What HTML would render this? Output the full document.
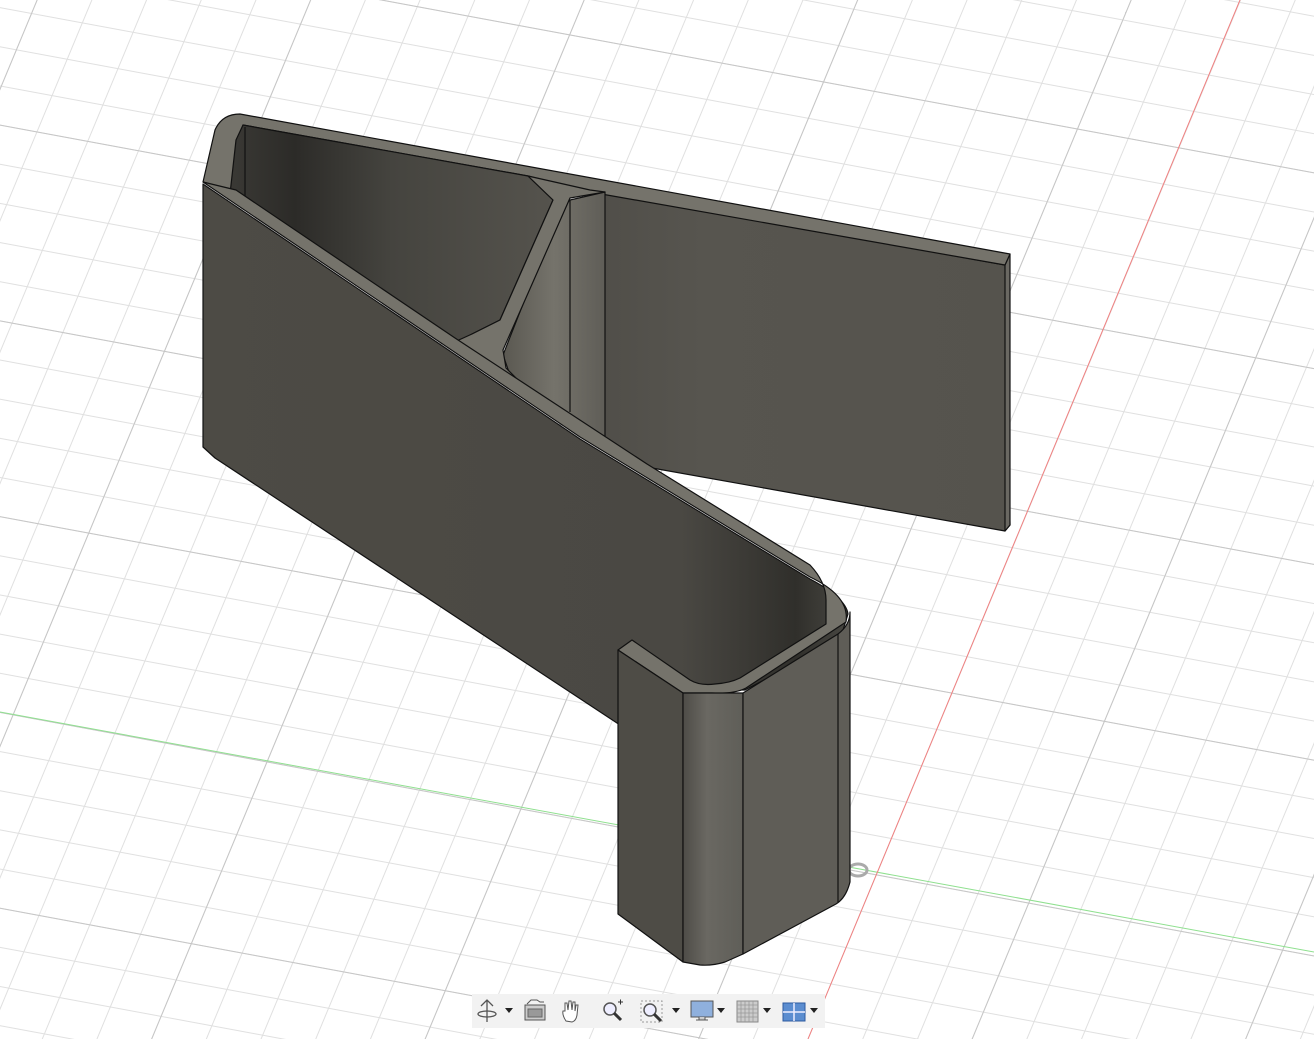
<!DOCTYPE html>
<html><head><meta charset="utf-8"><style>
html,body{margin:0;padding:0;background:#fff;width:1314px;height:1039px;overflow:hidden;font-family:"Liberation Sans",sans-serif}
svg{display:block}
</style></head><body>
<svg width="1314" height="1039" viewBox="0 0 1314 1039" xmlns="http://www.w3.org/2000/svg">
<defs>
<pattern id="pa" width="3000" height="38.5" patternUnits="userSpaceOnUse" patternTransform="rotate(10.5) translate(0,7)">
<line x1="0" y1="0.5" x2="3000" y2="0.5" stroke="#e0e0e0" stroke-width="1"/>
</pattern>
<pattern id="pA" width="3000" height="192.5" patternUnits="userSpaceOnUse" patternTransform="rotate(10.5) translate(0,122.5)">
<line x1="0" y1="0.5" x2="3000" y2="0.5" stroke="#c6c6c6" stroke-width="1"/>
</pattern>
<pattern id="pb" width="50.5" height="3000" patternUnits="userSpaceOnUse" patternTransform="rotate(22.6) translate(33.8,0)">
<line x1="0.5" y1="0" x2="0.5" y2="3000" stroke="#e0e0e0" stroke-width="1"/>
</pattern>
<pattern id="pB" width="252.5" height="3000" patternUnits="userSpaceOnUse" patternTransform="rotate(22.6) translate(33.8,0)">
<line x1="0.5" y1="0" x2="0.5" y2="3000" stroke="#c6c6c6" stroke-width="1"/>
</pattern>
<linearGradient id="pocket" x1="0" y1="0" x2="1" y2="0">
<stop offset="0" stop-color="#3a3935"/><stop offset="0.2" stop-color="#2c2b28"/><stop offset="0.5" stop-color="#45443f"/><stop offset="1" stop-color="#55534d"/>
</linearGradient>
<linearGradient id="rib" x1="0" y1="0" x2="1" y2="0">
<stop offset="0" stop-color="#5a5851"/><stop offset="0.5" stop-color="#75736b"/><stop offset="1" stop-color="#5f5d57"/>
</linearGradient>
<linearGradient id="round" x1="0" y1="0" x2="1" y2="0">
<stop offset="0" stop-color="#4e4c47"/><stop offset="0.4" stop-color="#6a6862"/><stop offset="1" stop-color="#5f5e58"/>
</linearGradient>
<linearGradient id="panel" x1="0" y1="0" x2="1" y2="0">
<stop offset="0" stop-color="#4e4c47"/><stop offset="0.3" stop-color="#57554f"/><stop offset="1" stop-color="#55534d"/>
</linearGradient>
<linearGradient id="wall" x1="203" y1="0" x2="840" y2="0" gradientUnits="userSpaceOnUse">
<stop offset="0" stop-color="#4d4b45"/><stop offset="0.75" stop-color="#4a4843"/><stop offset="0.93" stop-color="#302f2b"/><stop offset="1" stop-color="#45443f"/>
</linearGradient>
</defs>
<rect width="1314" height="1039" fill="#fff"/>
<rect width="1314" height="1039" fill="url(#pa)"/>
<rect width="1314" height="1039" fill="url(#pb)"/>
<rect width="1314" height="1039" fill="url(#pA)"/>
<rect width="1314" height="1039" fill="url(#pB)"/>
<!-- axes -->
<line x1="0" y1="712" x2="1314" y2="952" stroke="#8fe08f" stroke-width="1"/>
<line x1="1240" y1="0" x2="808" y2="1039" stroke="#f08080" stroke-width="1"/>
<ellipse cx="858" cy="870" rx="9" ry="6" fill="none" stroke="#aaa" stroke-width="3"/>

<g stroke="#111" stroke-width="1.2" stroke-linejoin="round">
<!-- right panel -->
<polygon points="590,190 1005,265 1010,525 1005,531 652,468 600,436 570,414" fill="url(#panel)"/>
<polygon points="1005,265 1010,254 1010,525 1005,531" fill="#6a6862"/>
<!-- back rim -->
<path d="M203,182 L215,130 Q222,114 240,114 L1010,254 L1005,265 L590,192 L528,176 L243,125 L236,192 Z" fill="#75736b"/>
<!-- left pocket -->
<polygon points="243,125 528,176 553,200 500,320 472,334 458,342 230,194 236,140" fill="url(#pocket)"/>
<line x1="245" y1="127" x2="245" y2="196"/>
<!-- rib interior -->
<polygon points="570,200 605,192 605,440 570,414 510,375 503,355 560,210" fill="url(#rib)"/>
<line x1="570" y1="200" x2="570" y2="412"/>
<!-- rib rim -->
<polygon points="528,176 590,190 605,192 570,198 503,350 506,368 522,384 450,344 472,334 500,320 553,200" fill="#75736b"/>
<!-- long wall face (continuous) -->
<path d="M203,184 L580,439 L810,579 Q846,598 848,614 L840,640 L745,690 L700,690 L632,642 L620,650 L620,725 L215,458 L203,447 Z" fill="url(#wall)"/>
<!-- rim band incl. foot rim -->
<path d="M203,182 L580,437 L810,577 Q850,596 846,622 L746,688 Q735,694 712,693 L683,693 L618,650 L632,640 L690,680 Q700,686 715,684 Q730,683 740,678 L826,624 L826,600 Q826,582 810,565 L647,464 L455,338 L236,190 Z" fill="#75736b"/>
<!-- foot faces -->
<polygon points="618,650 683,693 683,962 618,914" fill="#4e4c46"/>
<path d="M683,693 L743,693 L743,954 L725,962 Q712,966 700,965 L683,962 Z" fill="url(#round)"/>
<path d="M743,693 L838,634 Q850,625 850,612 L850,882 Q846,898 836,904 L743,954 Z" fill="#5f5d57"/>
<line x1="838" y1="634" x2="838" y2="902"/>
</g>

<!-- toolbar -->
<g>
<rect x="472" y="994" width="353" height="34" fill="#f2f2f2"/>
<g stroke="#555" stroke-width="1.3">
<path d="M487 1000 v22 M481 1006 l6 -6 6 6" fill="none"/>
<ellipse cx="487" cy="1014" rx="9" ry="3" fill="none"/>
</g>
<path d="M505 1008 h8 l-4 5z" fill="#222"/>
<rect x="525" y="1005" width="20" height="15" fill="#ccc" stroke="#555"/>
<path d="M527 1004 l4 -4 h6 l3 2 h4" stroke="#555" fill="none"/>
<rect x="528" y="1009" width="14" height="8" fill="#999" stroke="#666"/>
<path d="M566 1021 q-4 -6 -3 -10 l2 0 0 -8 2 0 1 7 1 -9 2 0 1 9 1 -8 2 0 0 9 1 -6 2 0 -1 10 q-1 6 -5 7z" fill="#fff" stroke="#555"/>
<circle cx="610" cy="1009" r="6" fill="#eef" stroke="#555" stroke-width="1.5"/>
<path d="M614 1013 l7 7" stroke="#333" stroke-width="3"/>
<path d="M618 1002 h5 M620.5 999.5 v5" stroke="#333"/>
<rect x="641" y="1001" width="21" height="21" fill="none" stroke="#999" stroke-dasharray="2,2"/>
<circle cx="650" cy="1010" r="6" fill="#eef" stroke="#555" stroke-width="1.5"/>
<path d="M654 1014 l7 7" stroke="#333" stroke-width="3"/>
<path d="M672 1008 h8 l-4 5z" fill="#222"/>
<rect x="691" y="1001" width="22" height="16" fill="#8fb0dd" stroke="#555"/>
<path d="M699 1017 v3 h-3 h12 h-3 v-3" stroke="#555" fill="#ccc"/>
<path d="M717 1008 h8 l-4 5z" fill="#222"/>
<rect x="737" y="1001" width="21" height="21" fill="#ccc" stroke="#888"/>
<path d="M741 1001v21M745 1001v21M749 1001v21M753 1001v21M737 1005h21M737 1009h21M737 1013h21M737 1017h21" stroke="#999" stroke-width="0.8"/>
<path d="M763 1008 h8 l-4 5z" fill="#222"/>
<rect x="783" y="1003" width="22" height="18" fill="#5b8dd0" stroke="#2d5aa0"/>
<path d="M794 1003 v18 M783 1012 h22" stroke="#eef" stroke-width="1.5"/>
<path d="M810 1008 h8 l-4 5z" fill="#222"/>
</g>
</svg>
</body></html>
